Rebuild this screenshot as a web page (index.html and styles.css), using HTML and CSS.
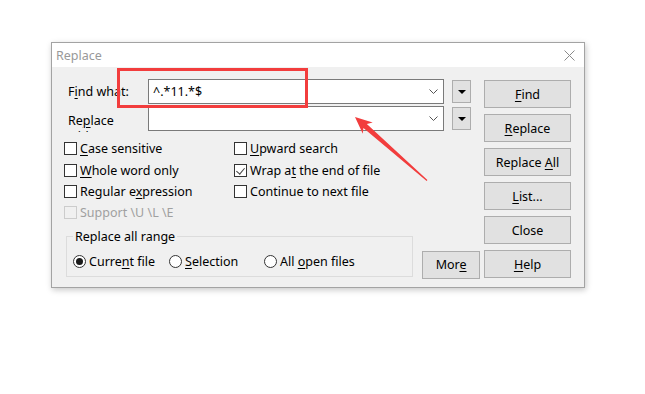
FILE: index.html
```html
<!DOCTYPE html>
<html lang="en">
<head>
    <meta charset="UTF-8">
    <title>Replace</title>
    <link rel="stylesheet" href="styles.css">
</head>
<body>

    <!-- Replace dialog -->
    <div class="dialog">
        <div class="titlebar">
            <span class="title">Replace</span>
            <svg class="close-x" width="11" height="11" viewBox="0 0 11 11">
                <path d="M0.5 0.5 L10.5 10.5 M10.5 0.5 L0.5 10.5" stroke="#8a8a8a" stroke-width="1" fill="none"/>
            </svg>
        </div>

        <div class="content">
            <div class="main">
                <div class="field-row">
                    <label class="field-label">F<u>i</u>nd what:</label>
                    <div class="combo">
                        <span class="combo-text">^.*11.*$</span>
                        <svg class="chevron" width="9" height="5" viewBox="0 0 9 5">
                            <path d="M0.5 0.5 L4.5 4.5 L8.5 0.5" stroke="#555" fill="none"/>
                        </svg>
                    </div>
                    <button class="drop-btn"><span class="tri"></span></button>
                </div>

                <div class="field-row second">
                    <label class="field-label clipped">Re<u>p</u>lace with:</label>
                    <div class="combo">
                        <span class="combo-text"></span>
                        <svg class="chevron" width="9" height="5" viewBox="0 0 9 5">
                            <path d="M0.5 0.5 L4.5 4.5 L8.5 0.5" stroke="#555" fill="none"/>
                        </svg>
                    </div>
                    <button class="drop-btn"><span class="tri"></span></button>
                </div>

                <!-- Options -->
                <div class="options">
                    <label class="check"><span class="box"></span><span><u>C</u>ase sensitive</span></label>
                    <label class="check"><span class="box"></span><span><u>U</u>pward search</span></label>
                    <label class="check"><span class="box"></span><span><u>W</u>hole word only</span></label>
                    <label class="check"><span class="box checked"></span><span>Wrap a<u>t</u> the end of file</span></label>
                    <label class="check"><span class="box"></span><span>Regular e<u>x</u>pression</span></label>
                    <label class="check"><span class="box"></span><span>Continue to next file</span></label>
                    <label class="check disabled"><span class="box"></span><span>Support \U \L \E</span></label>
                </div>

                <div class="bottom-row">
                    <fieldset class="range">
                        <legend>Replace all range</legend>
                        <div class="radios">
                            <label class="radio"><span class="ring on"></span><span>Curre<u>n</u>t file</span></label>
                            <label class="radio"><span class="ring"></span><span><u>S</u>election</span></label>
                            <label class="radio"><span class="ring"></span><span>All <u>o</u>pen files</span></label>
                        </div>
                    </fieldset>
                    <button class="btn more">Mor<u>e</u></button>
                </div>
            </div>

            <div class="side-buttons">
                <button class="btn"><u>F</u>ind</button>
                <button class="btn"><u>R</u>eplace</button>
                <button class="btn">Replace <u>A</u>ll</button>
                <button class="btn"><u>L</u>ist...</button>
                <button class="btn">Close</button>
                <button class="btn"><u>H</u>elp</button>
            </div>
        </div>
    </div>

    <!-- Red annotation drawn over the screenshot -->
    <svg class="annotation" width="645" height="394" viewBox="0 0 645 394">
        <rect x="118.5" y="69.5" width="188" height="37" fill="none" stroke="#f23d3d" stroke-width="3"/>
        <g transform="translate(355 117) rotate(41.4)">
            <polygon points="0,0 17,-7.5 13.5,-2.6 96,-0.6 96,0.6 13.5,2.6 17,7.5" fill="#f23d3d"/>
        </g>
    </svg>

</body>
</html>
```

FILE: styles.css
```css
* {
    box-sizing: border-box;
    margin: 0;
    padding: 0;
}

body {
    background: #ffffff;
    font-family: 'Noto Sans', 'Liberation Sans', sans-serif;
    font-size: 12.5px;
    color: #000;
    padding: 42px 0 0 51px;
    width: 645px;
    height: 394px;
    overflow: hidden;
}

u {
    text-decoration: underline;
    text-underline-offset: 2px;
}

/* Dialog window */
.dialog {
    width: 534px;
    border: 1px solid #a3a3a3;
    background: #f0f0f0;
    box-shadow: 1px 2px 6px rgba(0, 0, 0, 0.22);
}

.titlebar {
    height: 24px;
    background: #fff;
    display: flex;
    align-items: center;
    justify-content: space-between;
    padding: 0 9px 0 4px;
}

.title {
    color: #999;
    font-size: 12.5px;
}

.content {
    display: flex;
    gap: 4px;
    padding: 12px 12px 8px 12px;
}

.main {
    width: 416px;
}

/* Find / replace rows */
.field-row {
    display: flex;
    align-items: center;
    height: 25px;
}

.field-row.second {
    margin-top: 2px;
}

.field-label {
    width: 84px;
    padding-left: 4px;
    padding-top: 1px;
    line-height: 16px;
}

.field-label.clipped {
    padding-right: 20px;
    padding-top: 0;
    height: 19px;
    margin-top: 7px;
    align-self: flex-start;
    overflow: hidden;
}

.combo {
    width: 296px;
    height: 25px;
    background: #fff;
    border: 1px solid #7a7a7a;
    display: flex;
    align-items: center;
    justify-content: space-between;
    padding: 0 5px 0 4px;
}

.drop-btn {
    width: 19px;
    height: 23px;
    margin-left: 8px;
    background: #e1e1e1;
    border: 1px solid #adadad;
    display: flex;
    align-items: center;
    justify-content: center;
}

.tri {
    width: 0;
    height: 0;
    border-left: 4px solid transparent;
    border-right: 4px solid transparent;
    border-top: 4px solid #000;
}

/* Checkboxes */
.options {
    margin-top: 7px;
    display: grid;
    grid-template-columns: 170px auto;
    grid-auto-rows: 21.4px;
}

.check {
    display: flex;
    align-items: center;
    white-space: nowrap;
}

.box {
    width: 13px;
    height: 13px;
    border: 1px solid #333;
    background: #fff;
    margin-right: 3px;
    position: relative;
}

.box.checked::after {
    content: "";
    position: absolute;
    left: 3px;
    top: 1px;
    width: 4px;
    height: 7px;
    border-right: 1px solid #444;
    border-bottom: 1px solid #444;
    transform: rotate(40deg);
}

.check.disabled {
    color: #a0a0a0;
}

.check.disabled .box {
    border-color: #ccc;
    background: #f0f0f0;
}

/* Range group and More */
.bottom-row {
    margin-top: 5px;
    display: flex;
    align-items: flex-end;
}

.range {
    width: 348px;
    margin: 0 0 2px 2px;
    border: 1px solid #dcdcdc;
    padding: 0 6px 7px 6px;
}

.range legend {
    padding: 0 2px;
    line-height: 16px;
}

.radios {
    margin-top: 8px;
    display: grid;
    grid-template-columns: 96px 95px auto;
    height: 16px;
}

.radio {
    display: flex;
    align-items: center;
    white-space: nowrap;
}

.ring {
    width: 13px;
    height: 13px;
    border: 1px solid #333;
    border-radius: 50%;
    background: #fff;
    margin-right: 3px;
    display: flex;
    align-items: center;
    justify-content: center;
}

.ring.on::after {
    content: "";
    width: 7px;
    height: 7px;
    border-radius: 50%;
    background: #1a1a1a;
}

/* Buttons */
.btn {
    height: 28px;
    background: #e1e1e1;
    border: 1px solid #adadad;
    font-family: inherit;
    font-size: 12.5px;
    color: #000;
}

.more {
    width: 58px;
    margin-left: 9px;
}

.side-buttons {
    width: 87px;
    margin-top: 1px;
    display: flex;
    flex-direction: column;
    gap: 6px;
}

/* Annotation overlay */
.annotation {
    position: absolute;
    left: 0;
    top: 0;
    pointer-events: none;
}
```
